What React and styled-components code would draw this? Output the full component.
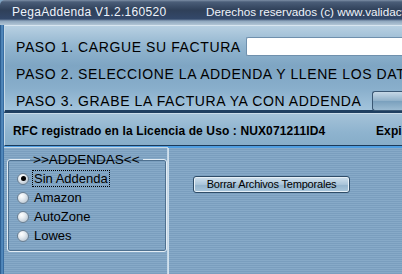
import React from "react";
import styled, { createGlobalStyle } from "styled-components";

const GlobalStyle = createGlobalStyle`
  html, body {
    margin: 0;
    padding: 0;
    background: #7fa3c2;
  }
  * {
    box-sizing: border-box;
  }
`;

const Window = styled.div`
  width: 402px;
  height: 274px;
  overflow: hidden;
  display: flex;
  flex-direction: column;
  font-family: "Liberation Sans", Arial, sans-serif;
  background: #7fa3c2;
`;

const TitleBar = styled.div`
  height: 25px;
  flex-shrink: 0;
  display: flex;
  align-items: flex-start;
  padding: 5px 0 0 12px;
  border-radius: 5px 0 0 0;
  background: linear-gradient(
    to bottom,
    #7d8fa6 0,
    #4a5d78 2px,
    #2f4059 10px,
    #33486a 19px,
    #8ea6bd 21px,
    #b2c6d6 25px
  );
  color: #eef3fb;
  white-space: nowrap;
`;

const TitleText = styled.span`
  width: 194px;
  flex-shrink: 0;
  font-size: 12px;
  letter-spacing: 0.3px;
`;

const Copyright = styled.span`
  font-size: 11.7px;
  line-height: 14px;
`;

const Frame = styled.div`
  flex: 1;
  display: flex;
  min-height: 0;
`;

const FrameEdge = styled.div`
  width: 4px;
  flex-shrink: 0;
  background: linear-gradient(to right, #1d4d80, #5d95c8 50%, #2a5f95);
`;

const Content = styled.div`
  flex: 1;
  display: flex;
  flex-direction: column;
  min-width: 0;
`;

const StepsPanel = styled.div`
  height: 88px;
  flex-shrink: 0;
  padding: 7px 0 0 11px;
  border-top: 1px solid #d9e6f0;
  border-left: 1px solid #c4d8e6;
  border-bottom: 3px solid #1f3f60;
  background: linear-gradient(
    to bottom,
    #b8d0e2 0,
    #92b5cf 20px,
    #7ea5c3 40px,
    #88aecb 62px,
    #a3c4dc 84px
  );
`;

const StepRow = styled.div`
  height: 27px;
  display: flex;
  align-items: center;
  white-space: nowrap;
`;

const StepLabel = styled.span`
  font-size: 14px;
  letter-spacing: 0.6px;
  color: #000;
  width: ${(p) => p.$width || "auto"};
  flex-shrink: 0;
`;

const FileInput = styled.div`
  flex: 1;
  height: 19px;
  background: #fff;
  border: 1px solid #6f90ad;
  border-right: none;
  border-radius: 2px 0 0 2px;
`;

const SideButton = styled.div`
  flex: 1;
  height: 20px;
  border: 1px solid #3a5874;
  border-right: none;
  border-radius: 3px 0 0 3px;
  background: linear-gradient(to bottom, #c6d8e6, #8fb0c9 50%, #7aa0bd 51%, #9bbbd2);
`;

const RfcPanel = styled.div`
  height: 33px;
  flex-shrink: 0;
  display: flex;
  align-items: center;
  padding: 3px 0 0 8px;
  border-top: 1px solid #c9dbe8;
  border-left: 1px solid #c4d8e6;
  border-bottom: 1px solid #1b3a5a;
  background: linear-gradient(to bottom, #a4c2d8, #8eb3ce 60%, #87adc9);
  font-size: 12px;
  letter-spacing: 0.12px;
  font-weight: bold;
  color: #000;
  white-space: nowrap;
`;

const RfcText = styled.span`
  width: 363px;
  flex-shrink: 0;
`;

const BottomArea = styled.div`
  flex: 1;
  display: flex;
  border-top: 2px solid #4e9de0;
  background: repeating-linear-gradient(
    to bottom,
    #87aac8 0,
    #87aac8 1px,
    #7a9ebe 1px,
    #7a9ebe 2px
  );
`;

const LeftPane = styled.div`
  width: 164px;
  flex-shrink: 0;
  padding: 5px 0 0 3px;
  border-top: 1px solid #c6d9e8;
  border-right: 1px solid #c4d8e8;
  margin-top: -1px;
`;

const GroupBox = styled.fieldset`
  margin: 0;
  width: 160px;
  padding: 3px 0 6px 9px;
  border: 1px solid #e2ecf4;
  border-radius: 3px;
  box-shadow: inset 0 0 0 1px #4f7190;
  display: flex;
  flex-direction: column;
`;

const Legend = styled.legend`
  margin-left: 13px;
  padding: 0 3px;
  font-size: 13.5px;
  color: #000;
  line-height: 13px;
`;

const RadioRow = styled.label`
  height: 19px;
  flex-shrink: 0;
  display: flex;
  align-items: center;
  gap: 4px;
  font-size: 13px;
  color: #000;
`;

const RadioDot = styled.span`
  width: 12px;
  height: 12px;
  border-radius: 50%;
  flex-shrink: 0;
  border: 1px solid #6a7f92;
  background: radial-gradient(circle at 35% 30%, #ffffff 0, #e7edf2 35%, #a9b8c6 100%);
  display: flex;
  align-items: center;
  justify-content: center;
  &::after {
    content: "";
    width: 5px;
    height: 5px;
    border-radius: 50%;
    background: ${(p) => (p.$checked ? "#000" : "transparent")};
  }
`;

const RadioText = styled.span`
  padding: 0 1px;
  outline: ${(p) => (p.$focused ? "1px dotted #000" : "none")};
  line-height: 15px;
`;

const RightPane = styled.div`
  flex: 1;
  padding: 26px 0 0 24px;
  border-left: 1px solid #d0e0ec;
`;

const CleanButton = styled.button`
  width: 157px;
  height: 17px;
  padding: 0;
  border: 1px solid #2f4d68;
  border-radius: 3px;
  background: linear-gradient(to bottom, #d2e2ee, #a9c4d9 50%, #92b3cc 51%, #a9c6db);
  box-shadow: inset 0 0 0 1px #e6f0f7;
  font-family: "Liberation Sans", Arial, sans-serif;
  font-size: 11px;
  letter-spacing: -0.2px;
  color: #000;
  cursor: pointer;
`;

const addendas = ["Sin Addenda", "Amazon", "AutoZone", "Lowes"];

export default function App() {
  return (
    <>
      <GlobalStyle />
      <Window>
        <TitleBar>
          <TitleText>PegaAddenda V1.2.160520</TitleText>
          <Copyright>Derechos reservados (c) www.validacfd.com</Copyright>
        </TitleBar>
        <Frame>
          <FrameEdge />
          <Content>
            <StepsPanel>
              <StepRow>
                <StepLabel $width="230px">PASO 1. CARGUE SU FACTURA</StepLabel>
                <FileInput />
              </StepRow>
              <StepRow>
                <StepLabel>PASO 2. SELECCIONE LA ADDENDA Y LLENE LOS DATOS</StepLabel>
              </StepRow>
              <StepRow>
                <StepLabel $width="356px">PASO 3. GRABE LA FACTURA YA CON ADDENDA</StepLabel>
                <SideButton />
              </StepRow>
            </StepsPanel>
            <RfcPanel>
              <RfcText>RFC registrado en la Licencia de Uso : NUX071211ID4</RfcText>
              <span>Expira</span>
            </RfcPanel>
            <BottomArea>
              <LeftPane>
                <GroupBox>
                  <Legend>&gt;&gt;ADDENDAS&lt;&lt;</Legend>
                  {addendas.map((name, i) => (
                    <RadioRow key={name}>
                      <RadioDot $checked={i === 0} />
                      <RadioText $focused={i === 0}>{name}</RadioText>
                    </RadioRow>
                  ))}
                </GroupBox>
              </LeftPane>
              <RightPane>
                <CleanButton>Borrar Archivos Temporales</CleanButton>
              </RightPane>
            </BottomArea>
          </Content>
        </Frame>
      </Window>
    </>
  );
}
